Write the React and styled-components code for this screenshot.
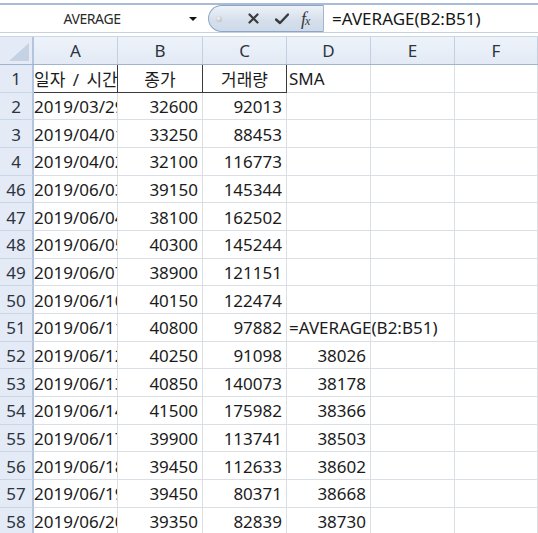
import React from "react";
import styled, { createGlobalStyle } from "styled-components";

const GlobalStyle = createGlobalStyle`
  html, body { margin: 0; padding: 0; background: #ffffff; }
  body { font-family: "Noto Sans", "Noto Sans CJK KR", sans-serif; }
  * { box-sizing: border-box; }
`;

const COLS = "34px 84px 85px 84px 84px 84px 83px";
const ROW_H = 27.67;

const Page = styled.div`
  width: 538px;
  height: 533px;
  overflow: hidden;
  padding-top: 3px;
  background: #fff;
`;

const FormulaBar = styled.div`
  display: flex;
  align-items: center;
  height: 30px;
  border-top: 2px solid #a9bcd6;
  border-bottom: 1px solid #c4d1e1;
`;

const NameBox = styled.div`
  width: 184px;
  text-align: center;
  font-size: 14px;
  color: #2a2a2a;
  letter-spacing: -0.4px;
`;

const DropArrow = styled.div`
  width: 0;
  height: 0;
  border-left: 4px solid transparent;
  border-right: 4px solid transparent;
  border-top: 4px solid #111;
  margin: 0 11px 0 5px;
`;

const Pill = styled.div`
  width: 116px;
  height: 27px;
  display: flex;
  align-items: center;
  border: 1px solid #8ea6c6;
  border-right: 1px solid #a4b6cd;
  border-radius: 14px 0 0 14px;
  background: linear-gradient(#edf2f8, #d6e0ec 55%, #cfdaea);
  padding-left: 7px;
`;

const Dot = styled.div`
  width: 6px;
  height: 6px;
  border-radius: 50%;
  background: radial-gradient(circle at 40% 35%, #f4f4f4, #a9afb6);
  margin-right: 24px;
`;

const IconBtn = styled.div`
  width: 14px;
  height: 14px;
  display: flex;
  align-items: center;
  justify-content: center;
  margin-right: ${(p) => p.$gap || 0}px;
`;

const Fx = styled.span`
  font-family: "Liberation Serif", serif;
  font-style: italic;
  font-size: 18px;
  color: #3a3a3a;
  letter-spacing: -1px;
  line-height: 1;
  sub {
    font-size: 12px;
    vertical-align: baseline;
  }
`;

const FormulaText = styled.div`
  flex: 1;
  padding-left: 8px;
  font-size: 17px;
  color: #161616;
  white-space: nowrap;
`;

const Grid = styled.div`
  margin-top: 3px;
`;

const HeaderRow = styled.div`
  display: grid;
  grid-template-columns: ${COLS};
  height: 29px;
  border-top: 1px solid #cbd8e8;
  border-bottom: 1px solid #9fb4cf;
  background: linear-gradient(#eef3fa, #e3eaf5);
`;

const ColHead = styled.div`
  display: flex;
  align-items: center;
  justify-content: center;
  font-size: 17px;
  color: #2d3440;
  border-right: 1px solid #c3d0e2;
`;

const Corner = styled.div`
  display: flex;
  align-items: flex-end;
  justify-content: flex-end;
  padding: 0 3px 3px 0;
  border-right: 2px solid #b3c5dc;
  background: #e4ebf6;
`;

const Row = styled.div`
  display: grid;
  grid-template-columns: ${COLS};
  height: ${ROW_H}px;
`;

const RowHead = styled.div`
  display: flex;
  align-items: center;
  justify-content: center;
  font-size: 17px;
  color: #2d3440;
  background: #e4ebf6;
  border-right: 2px solid #b3c5dc;
  border-bottom: 1px solid #c9d6e6;
  padding-top: 1px;
`;

const Cell = styled.div`
  display: flex;
  align-items: center;
  justify-content: ${(p) =>
    p.$align === "right" ? "flex-end" : p.$align === "center" ? "center" : "flex-start"};
  padding: 1px ${(p) => (p.$align === "right" ? "4px" : "0")} 0
    ${(p) => (p.$align === "left" ? `${p.$pad ?? 2}px` : "0")};
  font-size: 17px;
  word-spacing: ${(p) => p.$wordGap || 0}px;
  color: #1b1b1b;
  white-space: nowrap;
  overflow: ${(p) => (p.$spill ? "visible" : "hidden")};
  position: relative;
  z-index: ${(p) => (p.$spill ? 1 : 0)};
  border-right: 1px solid ${(p) => (p.$boxed ? "#3a3a3a" : "#dadfe6")};
  border-bottom: 1px solid ${(p) => (p.$boxed ? "#3a3a3a" : "#dadfe6")};
`;

const rows = [
  ["2", "2019/03/29", "32600", "92013", ""],
  ["3", "2019/04/01", "33250", "88453", ""],
  ["4", "2019/04/02", "32100", "116773", ""],
  ["46", "2019/06/03", "39150", "145344", ""],
  ["47", "2019/06/04", "38100", "162502", ""],
  ["48", "2019/06/05", "40300", "145244", ""],
  ["49", "2019/06/07", "38900", "121151", ""],
  ["50", "2019/06/10", "40150", "122474", ""],
  ["51", "2019/06/11", "40800", "97882", "=AVERAGE(B2:B51)"],
  ["52", "2019/06/12", "40250", "91098", "38026"],
  ["53", "2019/06/13", "40850", "140073", "38178"],
  ["54", "2019/06/14", "41500", "175982", "38366"],
  ["55", "2019/06/17", "39900", "113741", "38503"],
  ["56", "2019/06/18", "39450", "112633", "38602"],
  ["57", "2019/06/19", "39450", "80371", "38668"],
  ["58", "2019/06/20", "39350", "82839", "38730"],
];

export default function App() {
  return (
    <>
      <GlobalStyle />
      <Page>
        <FormulaBar>
          <NameBox>AVERAGE</NameBox>
          <DropArrow />
          <Pill>
            <Dot />
            <IconBtn $gap={15}>
              <svg width="11" height="11" viewBox="0 0 11 11">
                <path d="M1.5 1.5 L9.5 9.5 M9.5 1.5 L1.5 9.5" stroke="#3a3a3a" strokeWidth="2.2" strokeLinecap="round" />
              </svg>
            </IconBtn>
            <IconBtn $gap={12}>
              <svg width="14" height="12" viewBox="0 0 14 12">
                <path d="M1 6.5 L5 10 L13 1.5" stroke="#3a3a3a" strokeWidth="2.4" fill="none" strokeLinecap="round" strokeLinejoin="round" />
              </svg>
            </IconBtn>
            <Fx>
              f<sub>x</sub>
            </Fx>
          </Pill>
          <FormulaText>=AVERAGE(B2:B51)</FormulaText>
        </FormulaBar>
        <Grid>
          <HeaderRow>
            <Corner>
              <svg width="20" height="18" viewBox="0 0 20 18">
                <polygon points="20,0 20,18 0,18" fill="#c4d2e4" />
              </svg>
            </Corner>
            {["A", "B", "C", "D", "E", "F"].map((c) => (
              <ColHead key={c}>{c}</ColHead>
            ))}
          </HeaderRow>
          <Row>
            <RowHead>1</RowHead>
            <Cell $align="left" $pad={0} $wordGap={3} $boxed>일자 / 시간</Cell>
            <Cell $align="center" $boxed>종가</Cell>
            <Cell $align="center" $boxed>거래량</Cell>
            <Cell $align="left">SMA</Cell>
            <Cell />
            <Cell />
          </Row>
          {rows.map(([n, date, close, vol, sma]) => (
            <Row key={n}>
              <RowHead>{n}</RowHead>
              <Cell $align="left" $pad={0}>{date}</Cell>
              <Cell $align="right">{close}</Cell>
              <Cell $align="right">{vol}</Cell>
              <Cell $align={sma.startsWith("=") ? "left" : "right"} $spill={sma.startsWith("=")}>
                {sma}
              </Cell>
              <Cell />
              <Cell />
            </Row>
          ))}
        </Grid>
      </Page>
    </>
  );
}
